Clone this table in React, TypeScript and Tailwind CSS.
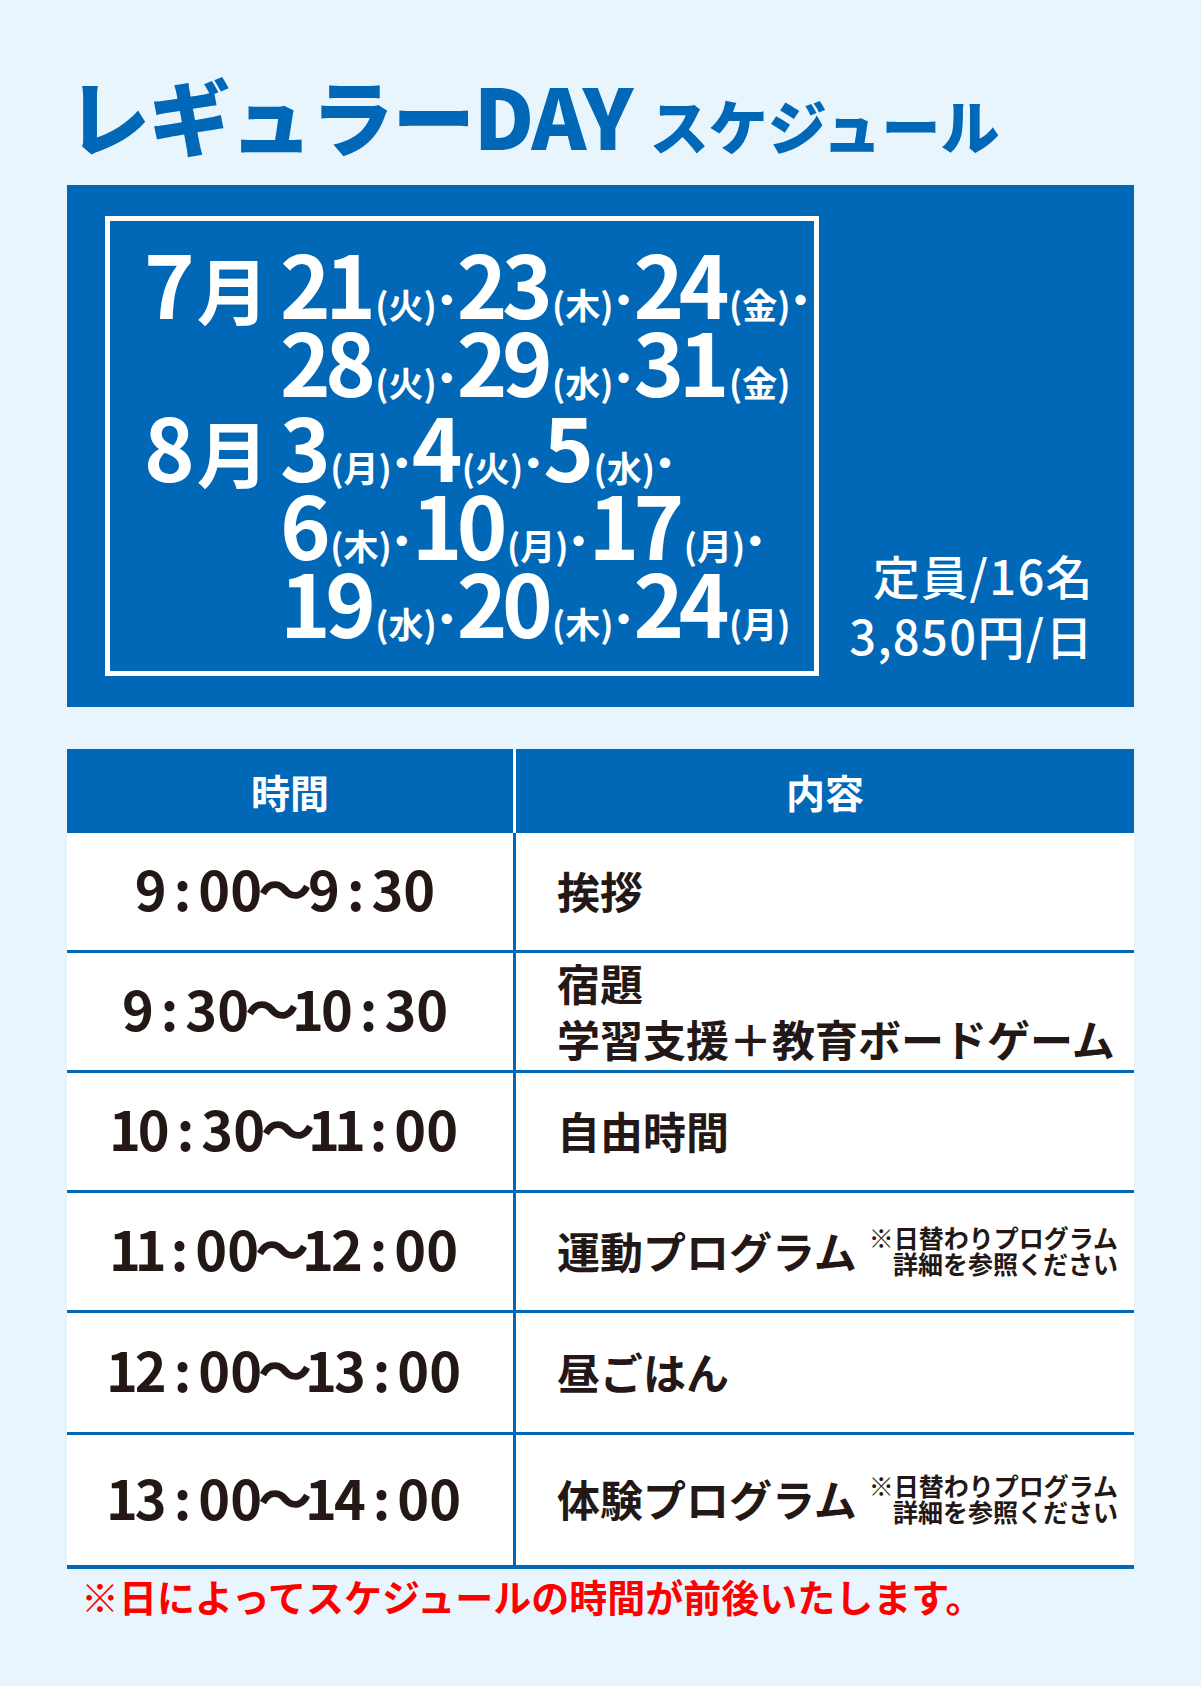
import React from 'react';

type Day = [string, string];

const lines: {days: Day[]; trail: boolean}[] = [
  {days: [['21', '火'], ['23', '木'], ['24', '金']], trail: true},
  {days: [['28', '火'], ['29', '水'], ['31', '金']], trail: false},
  {days: [['3', '月'], ['4', '火'], ['5', '水']], trail: true},
  {days: [['6', '木'], ['10', '月'], ['17', '月']], trail: true},
  {days: [['19', '水'], ['20', '木'], ['24', '月']], trail: false},
];

const Dot = () => (
  <span className="inline-block text-[40px] leading-none mx-[-10px] align-[4px] tracking-normal">・</span>
);

const DateLine = ({days, trail}: {days: Day[]; trail: boolean}) => (
  <div className="text-[86px] leading-[78px] whitespace-nowrap">
    {days.map(([d, w], i) => (
      <React.Fragment key={i}>
        {i > 0 && <Dot />}
        <span className="tracking-[-0.065em]">{d}</span>
        <span className="text-[35px] leading-none ml-[5px]">({w})</span>
      </React.Fragment>
    ))}
    {trail && <Dot />}
  </div>
);

const Month = ({n}: {n: string}) => (
  <div className="w-[136px] shrink-0 text-[86px] leading-[78px] whitespace-nowrap">
    {n}
    <span className="text-[72px] leading-[60px] ml-[2px]">月</span>
  </div>
);

const Time = ({t}: {t: string}) => (
  <span className="whitespace-nowrap">
    {t.split('').map((c, i) =>
      c === ':' ? (
        <span key={i} className="mx-[7px]">:</span>
      ) : c === '〜' ? (
        <span key={i} className="mx-[-4px]">〜</span>
      ) : c === '1' ? (
        <span key={i} className="mx-[-3px]">1</span>
      ) : (
        <React.Fragment key={i}>{c}</React.Fragment>
      )
    )}
  </span>
);

const Note = () => (
  <div className="ml-[12px] text-right text-[25px] leading-[26px] font-bold">
    <div>※日替わりプログラム</div>
    <div>詳細を参照ください</div>
  </div>
);

const rows: {time: string; h: string; content: React.ReactNode}[] = [
  {time: '9:00〜9:30', h: 'h-[120px]', content: <span>挨拶</span>},
  {
    time: '9:30〜10:30',
    h: 'h-[120px]',
    content: (
      <div className="leading-[56px]">
        <div>宿題</div>
        <div>学習支援＋教育ボードゲーム</div>
      </div>
    ),
  },
  {time: '10:30〜11:00', h: 'h-[120px]', content: <span>自由時間</span>},
  {
    time: '11:00〜12:00',
    h: 'h-[120px]',
    content: (
      <>
        <span>運動プログラム</span>
        <Note />
      </>
    ),
  },
  {time: '12:00〜13:00', h: 'h-[122px]', content: <span>昼ごはん</span>},
  {
    time: '13:00〜14:00',
    h: 'h-[134px]',
    content: (
      <>
        <span>体験プログラム</span>
        <Note />
      </>
    ),
  },
];

export default function App() {
  return (
    <div className="w-[1201px] h-[1686px] bg-[#e8f5fd] pt-[74px] pl-[67px] font-['Noto_Sans_CJK_JP',sans-serif] overflow-hidden">
      <h1 className="text-[83px] leading-[80px] font-black text-[#0068b7] whitespace-nowrap">
        <span className="tracking-[-0.02em]">レギュラーDAY</span>
        <span className="text-[59px] ml-[18px]">スケジュール</span>
      </h1>

      <div className="mt-[20px] w-[1067px] h-[522px] bg-[#0068b7] flex text-white">
        <div className="ml-[38px] mt-[31px] w-[714px] h-[460px] border-[5px] border-white pt-[22px] pl-[34px] font-bold">
          <div className="flex">
            <Month n="7" />
            <div>
              <DateLine {...lines[0]} />
              <DateLine {...lines[1]} />
            </div>
          </div>
          <div className="flex mt-[7px]">
            <Month n="8" />
            <div>
              <DateLine {...lines[2]} />
              <DateLine {...lines[3]} />
              <DateLine {...lines[4]} />
            </div>
          </div>
        </div>
        <div className="flex-1 flex flex-col items-end justify-end pr-[40px] pb-[42px] text-[47px] leading-[60px] font-medium tracking-[0.03em]">
          <div>定員/16名</div>
          <div>3,850円/日</div>
        </div>
      </div>

      <div className="mt-[42px] w-[1067px]">
        <div className="flex h-[84px] bg-[#0068b7] text-white text-[39px] font-bold">
          <div className="w-[449px] border-r-[3px] border-white flex items-center justify-center">時間</div>
          <div className="flex-1 flex items-center justify-center">内容</div>
        </div>
        <div className="bg-white text-[#231815] font-bold">
          {rows.map((r, i) => (
            <div
              key={i}
              className={`flex ${r.h} ${i === rows.length - 1 ? 'border-b-4' : 'border-b-[3px]'} border-[#0068b7]`}
            >
              <div className="w-[449px] border-r-[3px] border-[#0068b7] flex items-center justify-center pr-[10px] pb-[8px] text-[54px]">
                <Time t={r.time} />
              </div>
              <div className="flex-1 flex items-center pl-[41px] pb-[4px] text-[43px] leading-[56px]">{r.content}</div>
            </div>
          ))}
        </div>
      </div>

      <p className="mt-[5px] pl-[14px] text-[38px] leading-[44px] font-bold text-[#ff0000] whitespace-nowrap">
        ※日によってスケジュールの時間が前後いたします。
      </p>
    </div>
  );
}
